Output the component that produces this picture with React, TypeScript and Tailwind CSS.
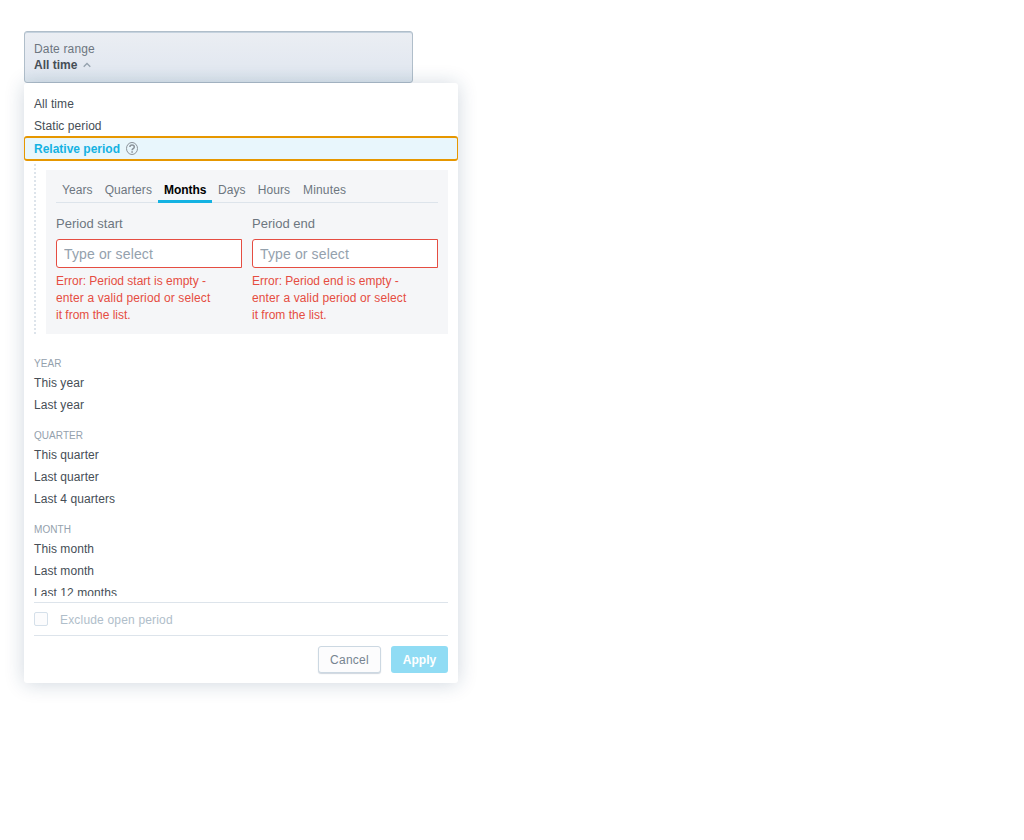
import React from "react";

const TABS = ["Years", "Quarters", "Months", "Days", "Hours", "Minutes"];

const GROUPS = [
  { title: "YEAR", items: ["This year", "Last year"] },
  { title: "QUARTER", items: ["This quarter", "Last quarter", "Last 4 quarters"] },
  { title: "MONTH", items: ["This month", "Last month", "Last 12 months"] },
];

function ListItem({ label }: { label: string }) {
  return <div className="h-[22px] px-2.5 text-xs leading-[22px] tracking-[0.07px] text-[#464e56]">{label}</div>;
}

function PeriodField({ label, error }: { label: string; error: string }) {
  return (
    <div className="w-[186px]">
      <div className="h-[19px] text-[13px] leading-[19px] tracking-[0.02px] text-[#6d7680]">{label}</div>
      <input
        placeholder="Type or select"
        className="mt-[6px] block h-[29px] w-full rounded-l-[3px] border border-[#e54d42] bg-white pr-2 pl-[7px] text-sm leading-5 tracking-[0.13px] outline-none placeholder:text-[#94a1ad]"
      />
      <div className="mt-[5px] w-[160px] text-xs leading-[17px] text-[#e54d42]">
        {error} <span className="tracking-[0.12px]">enter a valid period or select</span> it from the list.
      </div>
    </div>
  );
}

export default function App() {
  return (
    <div className="min-h-[840px] bg-white pt-[31px] pl-6 font-['Liberation_Sans',Arial,sans-serif]">
      <button className="block h-[52px] w-[389px] rounded-[3px] border border-[#b0beca] bg-[linear-gradient(180deg,#ebeef3_0%,#e4e9f1_60%,#e3e9f1_75%,#dde6ee_100%)] px-[9px] pb-px text-left shadow-[inset_0_1px_0_0_#c5d2de]">
        <span className="block text-xs leading-4 tracking-[0.15px] text-[#6d7680]">Date range</span>
        <span className="flex items-center text-xs leading-4 font-bold text-[#464e56]">
          All time
          <svg className="ml-[6px]" width="8" height="8" viewBox="0 0 8 8" fill="none" stroke="#94a1ad" strokeWidth="1.3">
            <path d="M0.7 5.7 4 2.5 7.3 5.7" />
          </svg>
        </span>
      </button>

      <div className="h-[600px] w-[434px] rounded-[3px] bg-white shadow-[0_1px_20px_0_rgba(20,56,93,0.2)]">
        <div className="h-[513px] overflow-hidden pt-2.5">
          <ListItem label="All time" />
          <ListItem label="Static period" />
          <div className="-mt-px flex h-[25px] items-center rounded-[3px] border-x border-y-2 border-[#e69700] bg-[#e8f6fc] px-[9px] text-xs font-bold text-[#14b2e2]">
            Relative period
            <svg className="ml-[6px]" width="12" height="13" viewBox="0 0 12 13" fill="none" stroke="#8b9299">
              <ellipse cx="6" cy="6.5" rx="5.5" ry="6" />
              <path strokeWidth="1.5" d="M3.9 4.9C3.9 3.6 4.7 2.9 6 2.9s2.3.8 2.3 2c0 1.6-2.2 1.7-2.2 3.3" />
              <path strokeWidth="1.6" d="M6.1 9.2v1.5" />
            </svg>
          </div>

          <div className="mt-[3px] ml-2.5 flex h-[170px]">
            <div className="h-full w-[2px] bg-[repeating-linear-gradient(180deg,#dde4eb_0,#dde4eb_2px,transparent_2px,transparent_4px)]" />
            <div className="mt-[6px] ml-2.5 h-[164px] w-[402px] bg-[#f5f6f8] px-2.5 pt-2">
              <div className="flex h-[25px] border-b border-[#dde4eb]">
                {TABS.map((tab) => (
                  <div
                    key={tab}
                    className={
                      tab === "Months"
                        ? "h-[25px] w-[54px] border-b-[3px] border-[#14b2e2] px-[6px] text-xs leading-6 font-bold tracking-[-0.05px] text-black"
                        : "px-[6px] text-xs leading-6 tracking-[0.08px] text-[#6d7680] last:pl-[7px] last:tracking-[0.15px]"
                    }
                  >
                    {tab}
                  </div>
                ))}
              </div>
              <div className="mt-[11px] flex gap-2.5">
                <PeriodField label="Period start" error="Error: Period start is empty -" />
                <PeriodField label="Period end" error="Error: Period end is empty -" />
              </div>
            </div>
          </div>

          <div className="pt-2.5">
            {GROUPS.map((group) => (
              <div key={group.title}>
                <div className="h-[28px] px-2.5 pt-3 text-[10px] leading-4 tracking-[0.05px] text-[#94a1ad]">
                  {group.title}
                </div>
                {group.items.map((item) => (
                  <ListItem key={item} label={item} />
                ))}
              </div>
            ))}
          </div>
        </div>

        <div className="mx-2.5 mt-[6px] flex h-[34px] items-center border-y border-[#dde4eb]">
          <div className="h-[14px] w-[14px] rounded-[2px] border border-[#d5e0ea] bg-[#fcfcfd]" />
          <span className="ml-3 pt-px text-xs leading-4 tracking-[0.18px] text-[#b0beca]">Exclude open period</span>
        </div>

        <div className="mt-2.5 flex justify-end gap-2.5 px-2.5">
          <button className="h-[27px] w-[63px] rounded-[3px] border border-[#ccd8e2] bg-[#fcfcfd] text-xs tracking-[0.25px] text-[#778491] shadow-[0_1px_1px_0_rgba(20,56,93,0.2)]">
            Cancel
          </button>
          <button className="h-[27px] w-[57px] rounded-[3px] bg-[#90dcf4] text-xs font-bold text-white">Apply</button>
        </div>
      </div>
    </div>
  );
}
